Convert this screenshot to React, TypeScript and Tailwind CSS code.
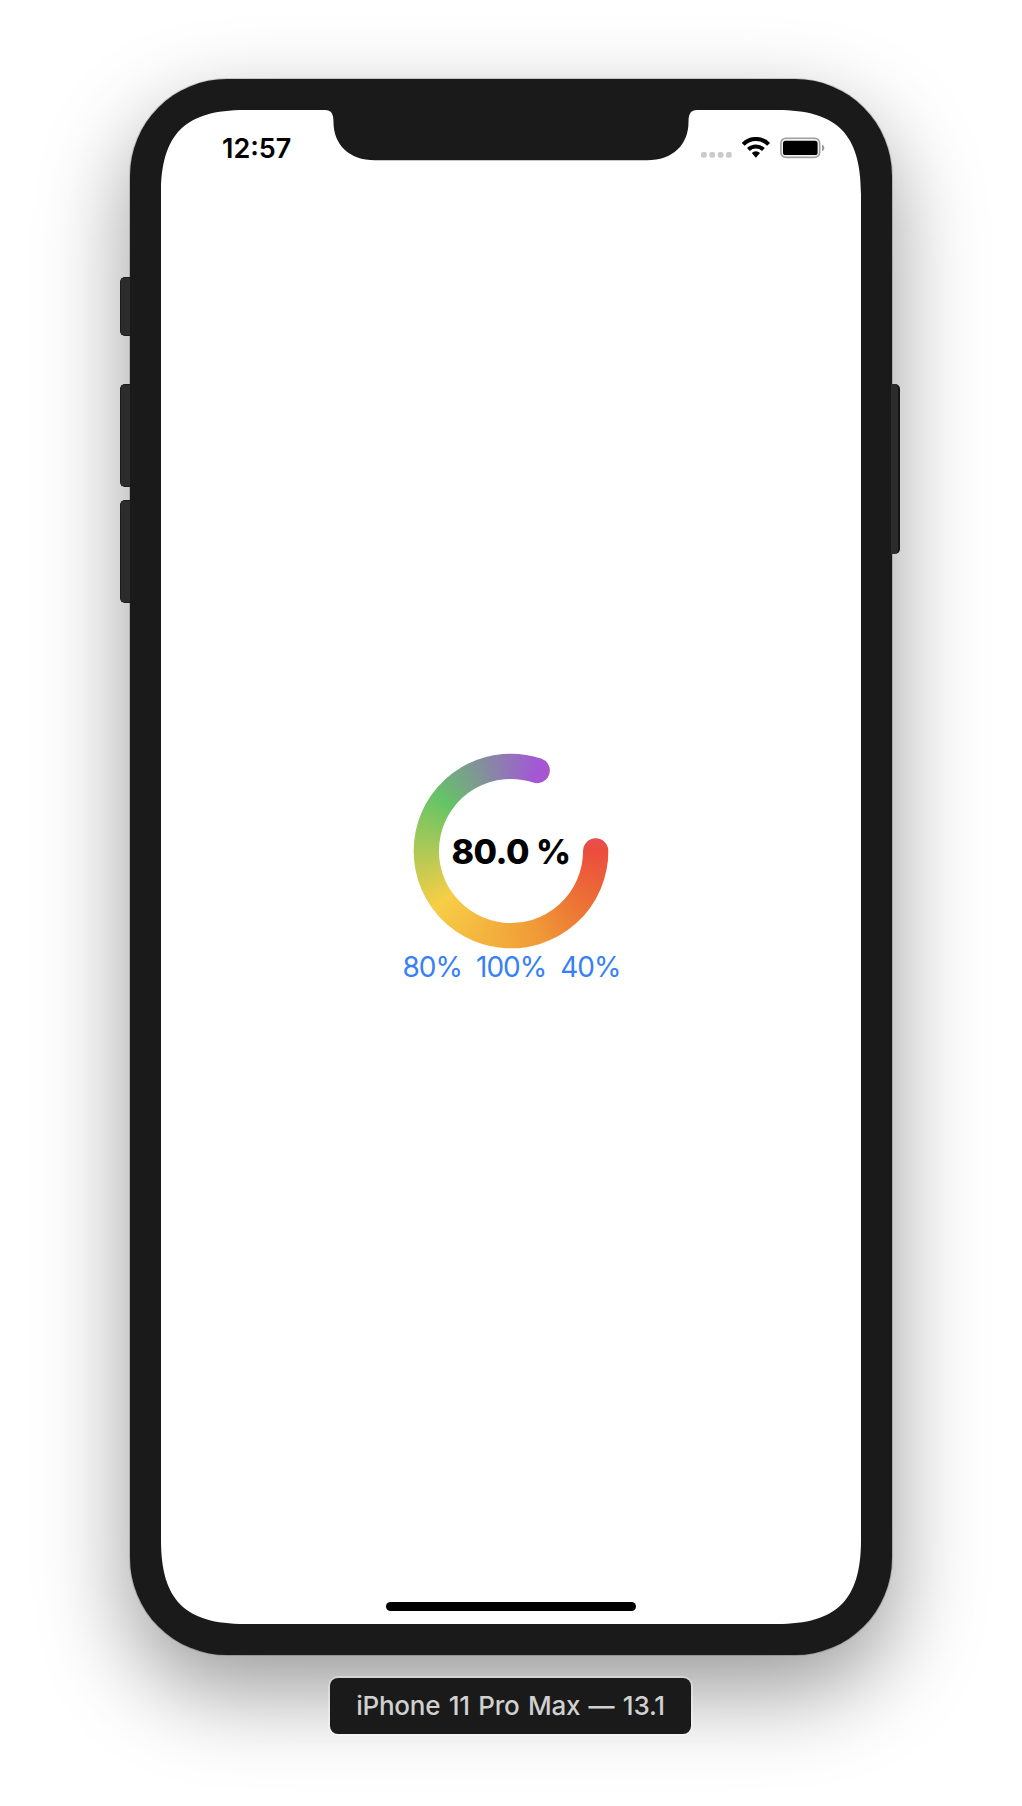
const ringStops =
  'conic-gradient(from 90deg, #eb4d3d 0deg, #ed7a35 45deg, #f09a37 72deg, #f7ce46 144deg, #65c466 216deg, #a357d7 288deg, #d64c78 345deg, #e64e50 352deg, #eb4d3d 360deg)';

const W = 700;
const H = 1514;
// Corner reach along each edge, and how far its control points sit from the corner.
const A = 84;
const K = 24;

// Continuous-curvature corners with the sensor notch cut out of the top edge.
const screenShape = [
  `M${A} 0 H164 C170 0 172.5 3.5 172.5 12 C172.5 34.5 188 50.3 214 50.3`,
  `H486 C512 50.3 527.5 34.5 527.5 12 C527.5 3.5 530 0 536 0`,
  `H${W - A} C${W - K} 0 ${W} ${K} ${W} ${A}`,
  `V${H - A} C${W} ${H - K} ${W - K} ${H} ${W - A} ${H}`,
  `H${A} C${K} ${H} 0 ${H - K} 0 ${H - A}`,
  `V${A} C0 ${K} ${K} 0 ${A} 0Z`,
].join(' ');

function StatusIcons() {
  return (
    <svg className="block" width="126" height="22" viewBox="0 0 126 22">
      <g fill="#cbcbcb">
        <rect x="1" y="15" width="5.8" height="5.8" rx="2" />
        <rect x="9.3" y="15" width="5.8" height="5.8" rx="2" />
        <rect x="17.7" y="15" width="5.8" height="5.8" rx="2" />
        <rect x="26" y="15" width="5.8" height="5.8" rx="2" />
      </g>
      <g fill="none" stroke="#000" strokeWidth="4">
        <path d="M43.2 7.4 A17.5 17.5 0 0 1 68.6 7.4" />
        <path d="M48.4 12.5 A10.7 10.7 0 0 1 63.4 12.5" />
      </g>
      <path d="M51.8 16.1 A5.6 5.6 0 0 1 60 16.1 L55.9 20.8Z" fill="#000" />
      <rect x="80.9" y="1.2" width="38.8" height="19.2" rx="5" fill="#f2f2f2" stroke="#a0a0a0" strokeWidth="1.6" />
      <rect x="83" y="3.8" width="34.6" height="14.2" rx="2.6" fill="#000" />
      <path d="M122 7.4 C125 8.6 125 13 122 14.2Z" fill="#9b9b9b" />
    </svg>
  );
}

function ProgressRing() {
  return (
    <div className="relative grid size-[196px] place-items-center">
      <svg className="absolute inset-0" width="196" height="196" viewBox="0 0 196 196">
        <defs>
          <mask id="arc" maskUnits="userSpaceOnUse" x="0" y="0" width="196" height="196">
            <path
              d="M182.7 98 A84.7 84.7 0 1 1 124.17 17.45"
              fill="none"
              stroke="#fff"
              strokeWidth="25.3"
              strokeLinecap="round"
            />
          </mask>
        </defs>
        <g mask="url(#arc)">
          <foreignObject width="196" height="196">
            <div className="size-full" style={{ background: ringStops }} />
          </foreignObject>
        </g>
      </svg>
      <span className="relative mt-[2px] text-[34px] leading-none font-extrabold tracking-[-0.5px] whitespace-nowrap text-black">
        80.0 %
      </span>
    </div>
  );
}

export default function App() {
  return (
    <div className="flex h-[1806px] w-[1022px] flex-col items-center overflow-hidden bg-white pt-[79px] font-['Inter','Liberation_Sans',sans-serif]">
      <div className="relative h-[1576px] w-[762px] shrink-0">
        <div className="size-full rounded-[97px] bg-[#1a1a1a] p-[31px] shadow-[0_0_0_1px_rgba(0,0,0,0.16),0_36px_90px_rgba(0,0,0,0.4)]">
          <main
            className="flex h-[1514px] w-[700px] flex-col items-center bg-white"
            style={{ clipPath: `path("${screenShape}")` }}
          >
            <header className="flex w-full items-start justify-between pt-[27px] pr-[35px] pl-[61px]">
              <time className="text-[27px] leading-[24px] font-semibold text-black">12:57</time>
              <StatusIcons />
            </header>
            <section className="mt-[592px] flex flex-col items-center">
              <ProgressRing />
              <div className="mt-px flex gap-[14px] pl-px text-[28px] leading-[34px] tracking-[-1px] text-[#3880f6]">
                <button>80%</button>
                <button>100%</button>
                <button>40%</button>
              </div>
            </section>
            <div className="mt-auto mb-[13px] h-[9px] w-[250px] rounded-full bg-black" />
          </main>
        </div>
        <div className="absolute top-[198px] -left-[10px] h-[59px] w-[10px] rounded-l-[5px] border border-r-0 border-[#1c1c1c] bg-[#2c2c2c]" />
        <div className="absolute top-[305px] -left-[10px] h-[103px] w-[10px] rounded-l-[5px] border border-r-0 border-[#1c1c1c] bg-[#2c2c2c]" />
        <div className="absolute top-[421px] -left-[10px] h-[103px] w-[10px] rounded-l-[5px] border border-r-0 border-[#1c1c1c] bg-[#2c2c2c]" />
        <div className="absolute top-[305px] -right-[8px] h-[170px] w-[9px] rounded-r-[5px] border-r-2 border-[#151515] bg-[#2c2c2c]" />
      </div>
      <div className="relative mt-[23px] mr-px flex h-14 w-[361px] shrink-0 items-center justify-center rounded-lg bg-[#1a1a1a] text-[26px] leading-none font-medium tracking-[-0.25px] [word-spacing:1.8px] whitespace-nowrap text-[#d0d0d0] shadow-[0_0_0_2px_rgba(255,255,255,0.3)]">
        iPhone 11 Pro Max — 13.1
      </div>
    </div>
  );
}
